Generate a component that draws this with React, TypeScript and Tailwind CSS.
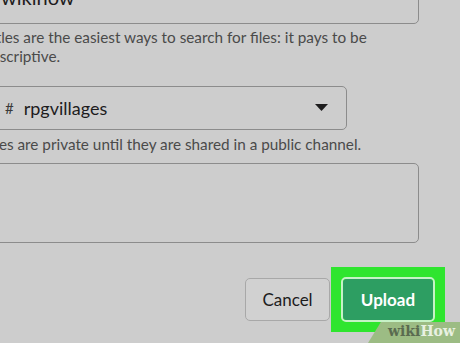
export default function App() {
  return (
    <div
      className="relative w-[460px] h-[343px] overflow-hidden bg-[#cdcdcd]"
      style={{ fontFamily: "Lato, 'Open Sans', sans-serif" }}
    >
      <div className="ml-[-17px] w-[436px] flex flex-col">
        <div className="mt-[-20px] h-[44px] border border-[#8c8c8c] rounded-[5px] flex items-end pl-[17px] pb-[16px]">
          <span className="text-[20px] leading-[20px] text-[#1d1c1d]">wikihow</span>
        </div>
        <p className="mt-[4px] text-[15.3px] leading-[19px] text-[#4a4a4a] pr-[40px]">
          Titles are the easiest ways to search for files: it pays to be descriptive.
        </p>
        <div className="mt-[20px] w-[364px] h-[44px] border border-[#8c8c8c] rounded-[5px] flex items-center pl-[21px] pr-[18px]">
          <span className="text-[15px] text-[#3a3a3a] mr-[10px]">#</span>
          <span className="text-[18px] text-[#1d1c1d] flex-1">rpgvillages</span>
          <svg width="13" height="8" viewBox="0 0 13 8" className="mb-[1px]">
            <polygon points="0,0 13,0 6.5,7" fill="#1d1c1d" />
          </svg>
        </div>
        <p className="mt-[5px] text-[15.3px] leading-[19px] text-[#4a4a4a]">
          Files are private until they are shared in a public channel.
        </p>
        <div className="mt-[9px] h-[80px] border border-[#8c8c8c] rounded-[5px]" />
        <div className="mt-[24px] flex justify-end items-center mr-[-26px]">
          <button className="w-[85px] h-[43px] border border-[#a8a8a8] rounded-[5px] bg-[#d1d1d1] text-[17px] text-[#1d1c1d] mr-[1px]">
            Cancel
          </button>
          <div className="bg-[#2fe52f] p-[10px]">
            <div className="border-2 border-[#c6f2c6] rounded-[5px]">
              <button className="w-[90px] h-[41px] rounded-[4px] bg-[#2d9e62] text-[17px] font-bold text-white flex items-center justify-center">
                Upload
              </button>
            </div>
          </div>
        </div>
      </div>
      <div
        className="absolute right-0 bottom-0 w-[92px] h-[21px] bg-[#9cbc84]"
        style={{ clipPath: "polygon(14% 0, 100% 0, 100% 100%, 0 100%)" }}
      />
      <div
        className="absolute right-[5px] bottom-[2px] text-[14px] font-bold leading-[20px]"
        style={{ fontFamily: "'DejaVu Serif', 'Liberation Serif', serif" }}
      >
        <span className="text-[#5a6b50]">wiki</span>
        <span className="text-[#e9f1e2]">How</span>
      </div>
    </div>
  );
}
